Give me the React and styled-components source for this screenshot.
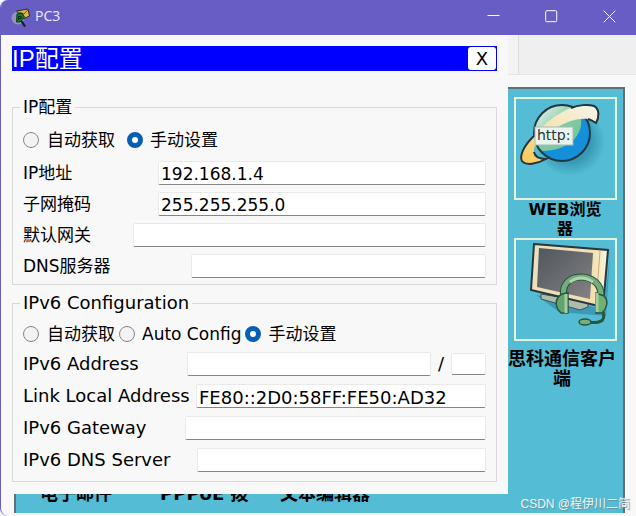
import React from "react";
import styled, { createGlobalStyle } from "styled-components";

const App = () => {
  return (
    <>
      <GlobalStyle />
      <Window>
        <TitleBar>
          <AppIcon />
          <WindowName>PC3</WindowName>
          <WindowButton aria-label="Minimize">
            <svg width="13" height="13" viewBox="0 0 13 13"><path d="M0.5 5.5h12" /></svg>
          </WindowButton>
          <WindowButton aria-label="Maximize">
            <svg width="13" height="13" viewBox="0 0 13 13"><rect x="0.700" y="0.700" width="11" height="11" rx="1" /></svg>
          </WindowButton>
          <WindowButton aria-label="Close">
            <svg width="13" height="13" viewBox="0 0 13 13"><path d="M0.7 0.7l11.6 11.6M12.3 0.7L0.7 12.3" /></svg>
          </WindowButton>
        </TitleBar>
        <Body>
          <Backdrop>
            <TabStrip>
              <TabLine />
            </TabStrip>
            <Desktop>
              <SideApps>
                <AppTile>
                  <BrowserIcon />
                </AppTile>
                <AppName>WEB浏览<br />器</AppName>
                <AppTile>
                  <CommunicatorIcon />
                </AppTile>
                <AppName $spaced>思科通信客户<br />端</AppName>
              </SideApps>
              <BottomApps>
                <span>电子邮件</span>
                <span>PPPoE 拨</span>
                <span>文本编辑器</span>
              </BottomApps>
            </Desktop>
          </Backdrop>
          <Dialog>
            <DialogHeader>
              <DialogTitle>IP配置</DialogTitle>
              <CloseButton>X</CloseButton>
            </DialogHeader>
            <Group $top={11} $bottom={6}>
              <legend>IP配置</legend>
              <Choices $gap={12}>
                <Choice><Radio name="v4" />自动获取</Choice>
                <Choice $tight><Radio name="v4" defaultChecked />手动设置</Choice>
              </Choices>
              <Rows $gap={7}>
                <Row $label={135}>
                  <label htmlFor="ip">IP地址</label>
                  <Field id="ip" defaultValue="192.168.1.4" />
                </Row>
                <Row $label={135}>
                  <label htmlFor="mask">子网掩码</label>
                  <Field id="mask" defaultValue="255.255.255.0" />
                </Row>
                <Row $label={110}>
                  <label htmlFor="gateway">默认网关</label>
                  <Field id="gateway" />
                </Row>
                <Row $label={168}>
                  <label htmlFor="dns">DNS服务器</label>
                  <Field id="dns" />
                </Row>
              </Rows>
            </Group>
            <Group $top={9} $bottom={9} $large>
              <legend>IPv6 Configuration</legend>
              <Choices $gap={4}>
                <Choice><Radio name="v6" />自动获取</Choice>
                <Choice $tight><Radio name="v6" />Auto Config</Choice>
                <Choice $tight><Radio name="v6" defaultChecked />手动设置</Choice>
              </Choices>
              <Rows $gap={8}>
                <Row $label={164}>
                  <label htmlFor="ip6">IPv6 Address</label>
                  <AddressFields>
                    <Field id="ip6" />
                    <span>/</span>
                    <PrefixField aria-label="Prefix length" />
                  </AddressFields>
                </Row>
                <Row $label={173}>
                  <label htmlFor="link6">Link Local Address</label>
                  <Field id="link6" defaultValue="FE80::2D0:58FF:FE50:AD32" />
                </Row>
                <Row $label={162}>
                  <label htmlFor="gateway6">IPv6 Gateway</label>
                  <Field id="gateway6" />
                </Row>
                <Row $label={174}>
                  <label htmlFor="dns6">IPv6 DNS Server</label>
                  <Field id="dns6" />
                </Row>
              </Rows>
            </Group>
          </Dialog>
        </Body>
        <Credit>CSDN @程伊川二简</Credit>
      </Window>
    </>
  );
};

const AppIcon = () => (
  <svg width="20" height="20" viewBox="0 0 20 20">
    <circle cx="7" cy="10" r="6.500" fill="#8f96bd" />
    <path d="M5.500 3L17 1L18.500 8L12 11Z" fill="#dcb94f" stroke="#2f2a17" />
    <path d="M6 3.500L13 6L17 1.500" fill="none" stroke="#6b5319" />
    <path d="M6 6L11 5L13.500 9L9 14L5.500 14Z" fill="#137a2a" stroke="#073d17" />
    <path d="M7.500 12V8.500h2.500v2H7.500" fill="none" stroke="#062d10" />
    <path d="M10.500 13L14 18.500" stroke="#191a24" strokeWidth="2.200" />
  </svg>
);

const BrowserIcon = () => (
  <svg width="98" height="98" viewBox="0 0 98 98">
    <defs>
      <linearGradient id="globe" x1="0" y1="0" x2="1" y2="1">
        <stop offset="0.1" stopColor="#e3f1ee" />
        <stop offset="0.5" stopColor="#83cba1" />
        <stop offset="0.8" stopColor="#78c69b" />
      </linearGradient>
      <linearGradient id="band" x1="0" y1="1" x2="1" y2="0">
        <stop offset="0" stopColor="#ffc54e" />
        <stop offset="0.45" stopColor="#f6e3ad" />
        <stop offset="1" stopColor="#f4f5ee" />
      </linearGradient>
      <radialGradient id="shade">
        <stop offset="0.6" stopColor="#2887a5" stopOpacity="0.65" />
        <stop offset="1" stopColor="#2887a5" stopOpacity="0" />
      </radialGradient>
    </defs>
    <circle cx="54" cy="42" r="35" fill="url(#shade)" />
    <circle cx="46" cy="34" r="28" fill="#168fdb" />
    <path d="M18 40A28 28 0 0 1 46 6C57 6 63 12 65 20C67 36 53 52 25 52Q20 47 18 40Z" fill="url(#globe)" />
    <circle cx="46" cy="34" r="28" fill="none" stroke="#203843" strokeWidth="2" />
    <path d="M19 36C8 46 3 57 6 62C10 67 21 65 30 60C24 60 19 58 18 53C17 48 22 41 30 36C46 23 61 19 72 20C75 21 77 22 80 24C83 19 84 10 78 7C72 5 62 6 55 9C42 14 28 24 19 36Z" fill="url(#band)" />
    <path d="M19 36C8 46 3 57 6 62C10 67 21 65 30 60C24 60 19 58 18 53M55 9C62 6 72 5 78 7C84 10 83 19 80 24C77 22 75 21 72 20" fill="none" stroke="#27343b" strokeWidth="2" />
    <rect x="19" y="28" width="38" height="18" fill="#eaf4ee" stroke="#a6bab5" />
    <text x="21" y="41" fontFamily="DejaVu Sans" fontSize="14" fill="#26373c">http:</text>
  </svg>
);

const CommunicatorIcon = () => (
  <svg width="98" height="98" viewBox="0 0 98 98">
    <defs>
      <linearGradient id="screen" x1="0" y1="0" x2="1" y2="1">
        <stop offset="0" stopColor="#4e565d" />
        <stop offset="1" stopColor="#858285" />
      </linearGradient>
      <linearGradient id="frame">
        <stop offset="0" stopColor="#eadfbd" />
        <stop offset="0.8" stopColor="#f4dfaf" />
        <stop offset="1" stopColor="#faf5df" />
      </linearGradient>
    </defs>
    <path d="M20 55L88 69L94 14L90 76L43 72Z" fill="#277e9c" opacity="0.55" />
    <path d="M25 54V59L64 70L72 67V62Z" fill="#aebdab" stroke="#39545b" />
    <path d="M18 4L92 10L87 67L15 50Z" fill="url(#frame)" stroke="#29363b" strokeWidth="2" />
    <path d="M23 8L77 13L74 59L21 47Z" fill="url(#screen)" />
    <path d="M84 11L80 65" stroke="#c5ad77" />
    <path d="M48 58C45 45 53 37 65 37C76 37 86 44 85 57" fill="none" stroke="#25503d" strokeWidth="7" />
    <path d="M48 58C45 45 53 37 65 37C76 37 86 44 85 57" fill="none" stroke="#72ad7d" strokeWidth="5" />
    <path d="M54 42Q65 34 77 42" fill="none" stroke="#b2d4a9" strokeWidth="3" />
    <path d="M46 54L52 53V73H45C38 66 39 58 46 54Z" fill="#63a36e" stroke="#285540" strokeWidth="1.500" />
    <path d="M80 53L88 56C93 61 91 68 86 73L80 73Z" fill="#71b071" stroke="#285540" strokeWidth="1.500" />
    <path d="M50 54V73M81 53V72" stroke="#a8cc9b" strokeWidth="3" />
    <path d="M87 72C90 81 84 84 71 82" fill="none" stroke="#285540" strokeWidth="3" />
    <ellipse cx="69" cy="82" rx="6" ry="3" fill="#76ae7c" stroke="#285540" strokeWidth="1.500" />
  </svg>
);

const GlobalStyle = createGlobalStyle`
  * {
    box-sizing: border-box;
  }
  body {
    margin: 0;
    background: #f8f8fb;
    color: #000;
    font-family: "DejaVu Sans", "Noto Sans CJK SC", sans-serif;
    font-size: 17px;
    line-height: 20px;
  }
  button, input {
    font: inherit;
    color: inherit;
    margin: 0;
  }
`;

const Window = styled.main`
  display: flex;
  flex-direction: column;
  position: relative;
  min-height: 100vh;
  overflow: hidden;
  border-left: 1px solid #675dc2;
  border-radius: 8px 0 0 8px;
  background: #f8f8f8;
`;

const TitleBar = styled.header`
  display: flex;
  align-items: center;
  height: 35px;
  padding-left: 10px;
  background: #675dc2;
  color: #fff;
`;

const WindowName = styled.h1`
  flex: 1;
  margin: 0;
  padding: 0 0 3px 4px;
  font-family: "Open Sans", "Noto Sans", sans-serif;
  font-size: 14px;
  font-weight: 400;
  color: #eeebff;
`;

const WindowButton = styled.button`
  display: flex;
  align-items: center;
  justify-content: center;
  width: 58px;
  height: 35px;
  padding: 0 6px 3px 0;
  border: 0;
  background: transparent;
  svg {
    fill: none;
    stroke: #fff;
  }
  &:last-child {
    width: 53px;
    padding-right: 0;
  }
`;

const Body = styled.div`
  flex: 1;
  display: grid;
  grid-template-columns: minmax(0, 1fr);
`;

const Backdrop = styled.div`
  grid-area: 1 / 1;
  display: flex;
  flex-direction: column;
  padding: 0 11px 3px 13px;
`;

const TabStrip = styled.div`
  display: flex;
  justify-content: flex-end;
  height: 40px;
  margin: 0 -11px 12px 0;
  background: #f3f3f3;
  border-bottom: 1px solid #e4e4e4;
`;

const TabLine = styled.div`
  width: 118px;
  border-left: 1px solid #dcdcdc;
  background: #efefef;
`;

const Desktop = styled.div`
  flex: 1;
  display: flex;
  flex-direction: column;
  justify-content: space-between;
  border: 2px solid #5f7076;
  border-bottom: 0;
  background: #54bcd4;
`;

const SideApps = styled.div`
  align-self: flex-end;
  display: flex;
  flex-direction: column;
  align-items: center;
  width: 116px;
  padding-top: 8px;
`;

const AppTile = styled.div`
  width: 103px;
  height: 103px;
  border: 2px solid #e5f3dc;
`;

const AppName = styled.div`
  padding: ${(props) => (props.$spaced ? "8px 6px 0 0" : "0")};
  font-size: ${(props) => (props.$spaced ? "18px" : "16px")};
  line-height: ${(props) => (props.$spaced ? "20px" : "19px")};
  font-weight: 700;
  text-align: center;
  white-space: nowrap;
`;

const BottomApps = styled.div`
  display: grid;
  grid-template-columns: repeat(3, 120px);
  padding: 0 0 9px 24px;
  font-size: 18px;
  font-weight: 700;
`;

const Dialog = styled.section`
  grid-area: 1 / 1;
  z-index: 1;
  align-self: start;
  margin-right: 128px;
  padding: 11px 11px 12px;
  background: #f8f8f8;
`;

const DialogHeader = styled.div`
  display: flex;
  align-items: center;
  justify-content: space-between;
  height: 25px;
  margin-bottom: 26px;
  padding-right: 1px;
  background: #0000fe;
`;

const DialogTitle = styled.h2`
  margin: 0;
  font-family: "Liberation Sans", "Noto Sans CJK SC", sans-serif;
  font-size: 24px;
  font-weight: 400;
  line-height: 25px;
  color: #fff;
`;

const CloseButton = styled.button`
  width: 28px;
  height: 23px;
  padding: 0;
  border: 0;
  border-radius: 3px;
  background: #fff;
  font-size: 18px;
`;

const Group = styled.fieldset`
  min-width: 0;
  margin: 0 0 8px;
  padding: ${(props) => props.$top}px 10px ${(props) => props.$bottom}px;
  border: 1px solid #d9d9d9;
  font-size: ${(props) => (props.$large ? 18 : 17)}px;
  &:last-child {
    margin-bottom: 0;
  }
  legend {
    margin-left: -3px;
    padding: 0 3px;
  }
`;

const Choices = styled.div`
  display: flex;
  gap: ${(props) => props.$gap}px;
  height: 24px;
  margin-bottom: ${(props) => (props.$gap > 10 ? 9 : 6)}px;
  font-size: 17px;
`;

const Choice = styled.label`
  display: flex;
  align-items: center;
  gap: ${(props) => (props.$tight ? 7 : 8)}px;
  white-space: nowrap;
`;

const Radio = styled.input.attrs({ type: "radio" })`
  appearance: none;
  width: 16px;
  height: 16px;
  border: 1px solid #868686;
  border-radius: 50%;
  background: #f3f3f3;
  &:checked {
    border: 5px solid #075fb5;
    background: #fff;
  }
`;

const Rows = styled.div`
  display: flex;
  flex-direction: column;
  gap: ${(props) => props.$gap}px;
`;

const Row = styled.div`
  display: grid;
  grid-template-columns: ${(props) => props.$label}px minmax(0, 1fr);
  align-items: center;
  height: 24px;
  white-space: nowrap;
`;

const Field = styled.input`
  width: 100%;
  min-width: 0;
  height: 24px;
  padding: 2px 2px 0;
  border: 1px solid #e9e9e9;
  border-bottom-color: #858585;
  border-radius: 2px;
  background: #fff;
  outline: none;
`;

const AddressFields = styled.div`
  display: flex;
  align-items: center;
  gap: 7px;
`;

const PrefixField = styled(Field)`
  flex: none;
  width: 35px;
  height: 22px;
`;

const Credit = styled.div`
  position: absolute;
  right: 6px;
  bottom: 2px;
  font-family: "Liberation Sans", "Noto Sans CJK SC", sans-serif;
  font-size: 12px;
  color: #eef7fa;
  text-shadow: 1px 1px 1px #6f8f99;
`;

export default App;
